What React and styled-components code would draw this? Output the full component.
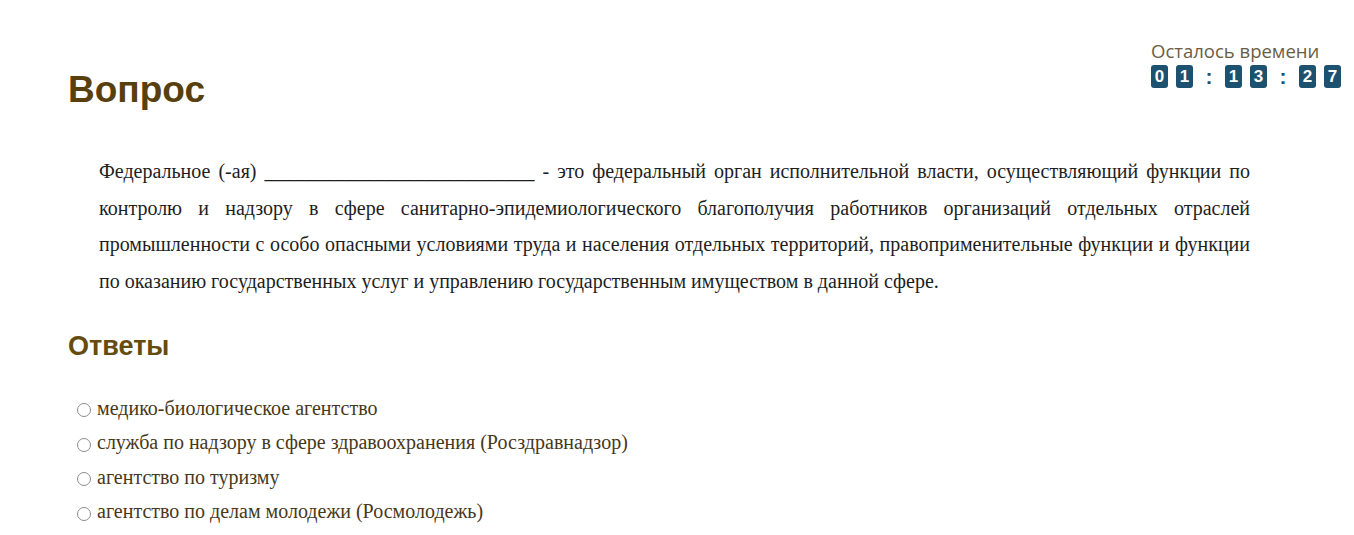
import React from "react";
import styled, { createGlobalStyle } from "styled-components";

const GlobalStyle = createGlobalStyle`
  body {
    margin: 0;
    background: #ffffff;
  }
`;

const Page = styled.div`
  padding: 40px 13px 0 68px;
  height: 535px;
  box-sizing: border-box;
  overflow: hidden;
`;

const Header = styled.div`
  display: flex;
  justify-content: space-between;
  align-items: flex-start;
`;

const Title = styled.h1`
  margin: 28px 0 0;
  font-family: "Liberation Sans", Arial, sans-serif;
  font-weight: bold;
  font-size: 37px;
  line-height: 44px;
  color: #583f0e;
`;

const Timer = styled.div`
  width: 190px;
  display: flex;
  flex-direction: column;
  gap: 3px;
`;

const TimerLabel = styled.div`
  font-family: "Open Sans", sans-serif;
  font-size: 18.5px;
  line-height: 22px;
  color: #6b5d44;
`;

const Digits = styled.div`
  display: flex;
  align-items: center;
`;

const Digit = styled.span`
  width: 17px;
  height: 23px;
  margin-right: ${(p) => (p.$pair ? "8px" : "0")};
  border-radius: 3px;
  background: #1c5270;
  color: #ffffff;
  font-family: "Liberation Sans", Arial, sans-serif;
  font-weight: bold;
  font-size: 17px;
  display: flex;
  align-items: center;
  justify-content: center;
`;

const Colon = styled.span`
  width: 32px;
  text-align: center;
  color: #1c5270;
  font-family: "Liberation Sans", Arial, sans-serif;
  font-weight: 900;
  font-size: 21px;
  line-height: 23px;
`;

const Question = styled.p`
  margin: 41px 91px 0 31px;
  font-family: "Liberation Serif", "Times New Roman", serif;
  font-size: 20px;
  line-height: 36.5px;
  text-align: justify;
  color: #1e1e1e;
`;

const SubTitle = styled.h2`
  margin: 30px 0 0;
  font-family: "Liberation Sans", Arial, sans-serif;
  font-weight: bold;
  font-size: 27px;
  line-height: 34px;
  color: #664b10;
`;

const Answers = styled.div`
  margin: 28px 0 0 9px;
  display: flex;
  flex-direction: column;
`;

const Answer = styled.label`
  display: flex;
  align-items: center;
  height: 34.5px;
  font-family: "Liberation Serif", "Times New Roman", serif;
  font-size: 20px;
  color: #47381a;
`;

const Radio = styled.input`
  appearance: none;
  width: 14px;
  height: 14px;
  margin: 4px 6px 0 0;
  border: 1px solid #8c8c8c;
  border-radius: 50%;
  background: #fff;
`;

const answers = [
  "медико-биологическое агентство",
  "служба по надзору в сфере здравоохранения (Росздравнадзор)",
  "агентство по туризму",
  "агентство по делам молодежи (Росмолодежь)",
];

export default function App() {
  return (
    <Page>
      <GlobalStyle />
      <Header>
        <Title>Вопрос</Title>
        <Timer>
          <TimerLabel>Осталось времени</TimerLabel>
          <Digits>
            <Digit $pair>0</Digit>
            <Digit>1</Digit>
            <Colon>:</Colon>
            <Digit $pair>1</Digit>
            <Digit>3</Digit>
            <Colon>:</Colon>
            <Digit $pair>2</Digit>
            <Digit>7</Digit>
          </Digits>
        </Timer>
      </Header>
      <Question>
        Федеральное (-ая) ___________________________ - это федеральный орган
        исполнительной власти, осуществляющий функции по контролю и надзору в
        сфере санитарно-эпидемиологического благополучия работников
        организаций отдельных отраслей промышленности с особо опасными
        условиями труда и населения отдельных территорий, правоприменительные
        функции и функции по оказанию государственных услуг и управлению
        государственным имуществом в данной сфере.
      </Question>
      <SubTitle>Ответы</SubTitle>
      <Answers>
        {answers.map((a) => (
          <Answer key={a}>
            <Radio type="radio" name="answer" />
            {a}
          </Answer>
        ))}
      </Answers>
    </Page>
  );
}
